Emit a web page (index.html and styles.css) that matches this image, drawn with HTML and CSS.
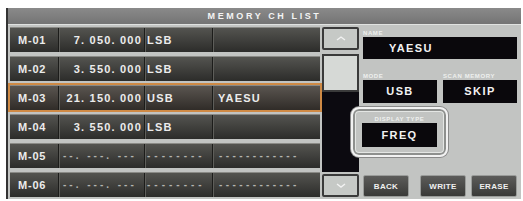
FILE: index.html
```html
<!DOCTYPE html>
<html lang="en">
<head>
    <meta charset="UTF-8">
    <title>Memory CH List</title>
    <link rel="stylesheet" href="styles.css">
</head>
<body>
    <div class="frame">
        <div class="title">MEMORY CH LIST</div>
        <div class="main">
            <!-- channel list -->
            <div class="list">
                <div class="row">
                    <div class="cell ch">M-01</div>
                    <div class="cell freq">7. 050. 000</div>
                    <div class="cell mode">LSB</div>
                    <div class="cell name"></div>
                </div>
                <div class="row">
                    <div class="cell ch">M-02</div>
                    <div class="cell freq">3. 550. 000</div>
                    <div class="cell mode">LSB</div>
                    <div class="cell name"></div>
                </div>
                <div class="row selected">
                    <div class="cell ch">M-03</div>
                    <div class="cell freq">21. 150. 000</div>
                    <div class="cell mode">USB</div>
                    <div class="cell name">YAESU</div>
                </div>
                <div class="row">
                    <div class="cell ch">M-04</div>
                    <div class="cell freq">3. 550. 000</div>
                    <div class="cell mode">LSB</div>
                    <div class="cell name"></div>
                </div>
                <div class="row">
                    <div class="cell ch">M-05</div>
                    <div class="cell freq dim">--. ---. ---</div>
                    <div class="cell mode dim">--------</div>
                    <div class="cell name dim">------------</div>
                </div>
                <div class="row">
                    <div class="cell ch">M-06</div>
                    <div class="cell freq dim">--. ---. ---</div>
                    <div class="cell mode dim">--------</div>
                    <div class="cell name dim">------------</div>
                </div>
            </div>

            <!-- scroll bar -->
            <div class="scroll">
                <div class="scroll-btn">
                    <svg width="10" height="5" viewBox="0 0 10 5"><polyline points="1,4 5,1 9,4" fill="none" stroke="#f2f2f2" stroke-width="1.4"/></svg>
                </div>
                <div class="track">
                    <div class="thumb"></div>
                </div>
                <div class="scroll-btn">
                    <svg width="10" height="5" viewBox="0 0 10 5"><polyline points="1,1 5,4 9,1" fill="none" stroke="#f2f2f2" stroke-width="1.4"/></svg>
                </div>
            </div>

            <!-- settings panel -->
            <div class="panel">
                <div class="label">NAME</div>
                <div class="box name-box">YAESU</div>
                <div class="pair">
                    <div class="field">
                        <div class="label">MODE</div>
                        <div class="box">USB</div>
                    </div>
                    <div class="field">
                        <div class="label">SCAN MEMORY</div>
                        <div class="box">SKIP</div>
                    </div>
                </div>
                <div class="display-type">
                    <div class="label center">DISPLAY TYPE</div>
                    <div class="box">FREQ</div>
                </div>
                <div class="buttons">
                    <div class="btn">BACK</div>
                    <div class="btn push">WRITE</div>
                    <div class="btn">ERASE</div>
                </div>
            </div>
        </div>
    </div>
</body>
</html>
```

FILE: styles.css
```css
body {
    margin: 0;
    background: #fff;
    font-family: 'Liberation Sans', Arial, sans-serif;
    font-weight: bold;
    color: #ececec;
}

.frame {
    margin: 8px 0 0 6px;
    width: 515px;
    height: 191px;
    background: #c2c4c2;
    border-left: 2px solid #333;
    box-sizing: border-box;
    display: flex;
    flex-direction: column;
}

.title {
    height: 16px;
    line-height: 16px;
    background: linear-gradient(#8a8a8a, #747474);
    text-align: center;
    font-size: 9px;
    letter-spacing: 2.6px;
    color: #f4f4f4;
    border-bottom: 1px solid #e0e2e0;
}

.main {
    flex: 1;
    display: flex;
    padding: 2px 2px 3px 2px;
}

/* Channel list */
.list {
    width: 310px;
    display: flex;
    flex-direction: column;
    gap: 4px;
}

.row {
    height: 25px;
    display: flex;
    background: linear-gradient(#545450, #2c2c2a);
    border-top: 1px solid #8a8a86;
    box-sizing: border-box;
}

.row.selected {
    outline: 2px solid #cf8a45;
    background: linear-gradient(#5a5550, #302c28);
}

.cell {
    font-size: 11px;
    line-height: 24px;
    letter-spacing: 1.2px;
    border-right: 1px solid #1c1c1a;
    box-shadow: inset 1px 0 #5e5e5a;
    box-sizing: border-box;
    white-space: nowrap;
    overflow: hidden;
}

.ch {
    width: 49px;
    padding-left: 8px;
    letter-spacing: 0.8px;
    box-shadow: none;
}

.freq {
    width: 86px;
    text-align: right;
    padding-right: 2px;
}

.mode {
    width: 68px;
    padding-left: 2px;
}

.name {
    flex: 1;
    padding-left: 5px;
    border-right: none;
}

.dim {
    color: #b4b4b0;
    font-size: 10px;
}

.freq.dim {
    text-align: left;
    padding-left: 4px;
    letter-spacing: 3px;
}

.mode.dim {
    letter-spacing: 4px;
}

.name.dim {
    padding-left: 6px;
    letter-spacing: 3.4px;
}

/* Scroll bar */
.scroll {
    width: 37px;
    margin-left: 2px;
    display: flex;
    flex-direction: column;
}

.scroll-btn {
    height: 23px;
    background: #c6c9c6;
    border: 2px solid #3a3a3a;
    border-radius: 2px;
    box-sizing: border-box;
    display: flex;
    justify-content: center;
    align-items: center;
}

.track {
    flex: 1;
    margin: 4px 0 2px;
    background: #0c0a10;
}

.thumb {
    height: 38px;
    background: #d6d9d6;
    border: 2px solid #3a3a3a;
    box-sizing: border-box;
}

/* Settings panel */
.panel {
    flex: 1;
    padding-left: 4px;
    padding-right: 2px;
    display: flex;
    flex-direction: column;
}

.label {
    font-size: 6px;
    letter-spacing: 0.6px;
    color: #eef0ee;
    height: 10px;
    line-height: 12px;
}

.label.center {
    text-align: center;
    height: 8px;
    line-height: 8px;
}

.box {
    background: #0a080c;
    height: 22px;
    line-height: 22px;
    text-align: center;
    font-size: 11px;
    letter-spacing: 1.4px;
    color: #f2f2f2;
}

.name-box {
    text-align: left;
    padding-left: 26px;
}

.pair {
    display: flex;
    gap: 6px;
    margin-top: 11px;
}

.field {
    flex: 1;
}

.field .box {
    height: 23px;
    line-height: 23px;
}

.display-type {
    width: 97px;
    height: 50px;
    margin: 4px 0 0 -12px;
    padding: 6px 9px 0 9px;
    box-sizing: border-box;
    border: 2px solid #f2f2f2;
    border-radius: 8px;
    background: #c2c4c2;
    box-shadow: 0 0 0 1px #8a8a8a, inset 0 0 0 2px #8e908e, inset 0 0 0 3px #e4e6e4;
}

.display-type .box {
    height: 24px;
    line-height: 24px;
}

.buttons {
    margin-top: auto;
    display: flex;
    gap: 5px;
}

.btn {
    width: 46px;
    height: 22px;
    line-height: 22px;
    text-align: center;
    font-size: 8px;
    letter-spacing: 0.3px;
    color: #f0f0f0;
    background: linear-gradient(#5c5c5a, #3a3a38);
    border: 1px solid #9a9c9a;
    border-radius: 2px;
    box-sizing: border-box;
}

.btn.push {
    margin-left: auto;
}
```
